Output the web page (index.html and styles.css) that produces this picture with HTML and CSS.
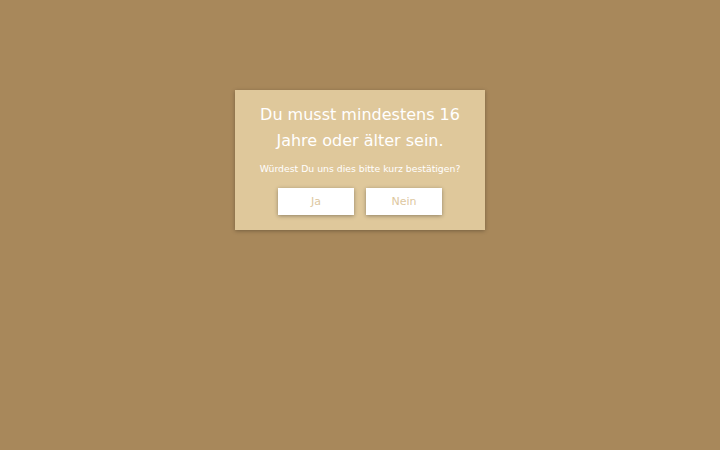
FILE: index.html
```html
<!DOCTYPE html>
<html lang="de">
<head>
<meta charset="utf-8">
<link rel="stylesheet" href="styles.css">
</head>
<body>
<div class="overlay">
  <div class="dialog">
    <h1 class="title">Du musst mindestens 16 Jahre oder älter sein.</h1>
    <p class="question">Würdest Du uns dies bitte kurz bestätigen?</p>
    <div class="actions">
      <button class="btn">Ja</button>
      <button class="btn">Nein</button>
    </div>
  </div>
</div>
</body>
</html>
```
FILE: styles.css
```css
html, body {
  margin: 0;
  padding: 0;
  height: 100%;
}
body {
  background: #a8885b;
  font-family: "DejaVu Sans", sans-serif;
}
.overlay {
  display: flex;
  justify-content: center;
  padding-top: 90px;
}
.dialog {
  width: 250px;
  box-sizing: border-box;
  background: #dfc89b;
  box-shadow: 0 1px 4px rgba(0,0,0,0.3);
  padding: 12px 16px 15px;
  text-align: center;
  color: #ffffff;
}
.title {
  margin: 0;
  font-size: 16px;
  font-weight: normal;
  line-height: 26px;
}
.question {
  margin: 8px 0 0;
  font-size: 9.3px;
  line-height: 14px;
}
.actions {
  display: flex;
  justify-content: center;
  gap: 12px;
  margin-top: 12px;
}
.btn {
  width: 76px;
  height: 27px;
  border: none;
  background: #ffffff;
  color: #ddc7a0;
  font-family: "DejaVu Sans", sans-serif;
  font-size: 11px;
  box-shadow: 0 1px 4px rgba(0,0,0,0.35);
  padding: 0;
}
```
